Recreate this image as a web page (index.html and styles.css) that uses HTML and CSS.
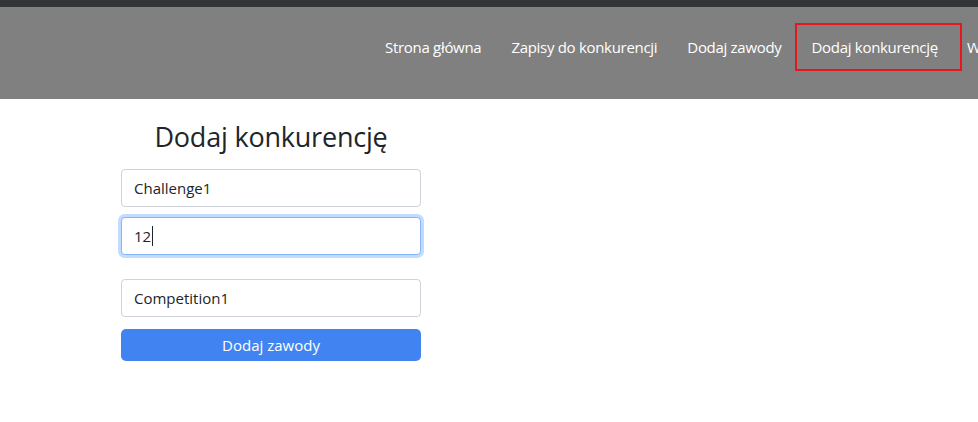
FILE: index.html
```html
<!DOCTYPE html>
<html lang="pl">
<head>
<meta charset="utf-8">
<link rel="stylesheet" href="styles.css">
</head>
<body>
<div class="topbar"></div>
<header class="nav">
  <ul class="menu">
    <li><a href="#">Strona główna</a></li>
    <li><a href="#">Zapisy do konkurencji</a></li>
    <li><a href="#">Dodaj zawody</a></li>
    <li class="active"><a href="#">Dodaj konkurencję</a></li>
    <li class="after"><a href="#">Wyniki</a></li>
  </ul>
</header>
<main class="content">
  <form class="form">
    <h2 class="title">Dodaj konkurencję</h2>
    <input class="field" type="text" value="Challenge1">
    <div class="field focus">12<span class="caret"></span></div>
    <input class="field third" type="text" value="Competition1">
    <button class="btn" type="button">Dodaj zawody</button>
  </form>
</main>
</body>
</html>
```
FILE: styles.css
```css
* { box-sizing: border-box; }
html, body { margin: 0; padding: 0; background: #fff; overflow: hidden; }
body { font-family: "Open Sans", "Noto Sans", sans-serif; color: #212529; width: 978px; height: 422px; }
.topbar { height: 7px; background: #333438; }
.nav { height: 92px; background: #808080; overflow: hidden; }
.menu { list-style: none; margin: 0; padding: 16px 0 0 370px; display: flex; white-space: nowrap; }
.menu li a { display: block; padding: 14px 15px; color: #fff; text-decoration: none; font-size: 15px; line-height: 20px; letter-spacing: -0.3px; }
.menu li.active { border: 2px solid #e8141e; margin-left: -2px; }
.menu li.active a { padding: 12px 22px 12px 15px; }
.menu li.after a { padding-left: 5px; }
.content { padding: 18px 0 0 121px; }
.form { width: 300px; display: flex; flex-direction: column; }
.title { margin: 0 0 12px; text-align: center; font-weight: 400; font-size: 27px; line-height: 40px; color: #212529; letter-spacing: -0.2px; }
.field { height: 38px; width: 300px; border: 1px solid #ced4da; border-radius: 4px; padding: 0 12px; font: 15px "Open Sans", "Noto Sans", sans-serif; color: #212529; background: #fff; outline: none; display: flex; align-items: center; }
.field + .field { margin-top: 10px; }
.focus { border-color: #86b7fe; box-shadow: 0 0 0 3px rgba(13,110,253,0.25); }
.caret { display: inline-block; width: 1px; height: 20px; background: #212529; margin-left: 1px; }
.field.third { margin-top: 24px; }
.btn { margin-top: 12px; height: 32px; width: 300px; background: #4184f1; border: none; border-radius: 5px; color: #fff; font: 15px "Open Sans", "Noto Sans", sans-serif; padding: 0; }
```
